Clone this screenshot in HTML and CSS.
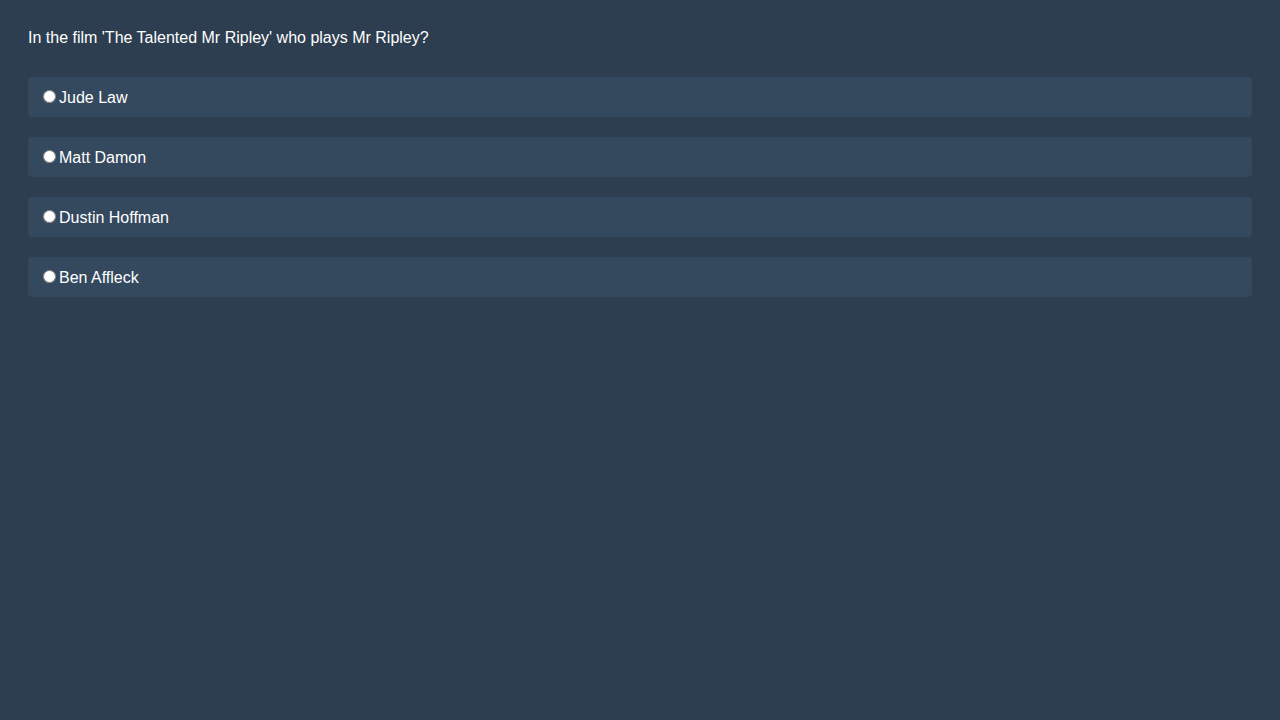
FILE: index.html
```html
<!DOCTYPE html>
<html lang="en">
<head>
<meta charset="utf-8">
<title>Quiz</title>
<link rel="stylesheet" href="styles.css">
</head>
<body>
<main class="quiz">
  <p class="question">In the film 'The Talented Mr Ripley' who plays Mr Ripley?</p>
  <div class="options">
    <label class="option"><input type="radio" name="answer" value="a">Jude Law</label>
    <label class="option"><input type="radio" name="answer" value="b">Matt Damon</label>
    <label class="option"><input type="radio" name="answer" value="c">Dustin Hoffman</label>
    <label class="option"><input type="radio" name="answer" value="d">Ben Affleck</label>
  </div>
</main>
</body>
</html>
```

FILE: styles.css
```css
html, body {
  margin: 0;
  height: 100%;
  background: #2c3e50;
}
body {
  font-family: "Liberation Sans", Arial, sans-serif;
  font-size: 16px;
  color: #ffffff;
}
.quiz {
  padding: 29px 28px 28px;
}
.question {
  margin: 0 0 30px 0;
  line-height: 18px;
}
.options {
  display: flex;
  flex-direction: column;
  gap: 20px;
}
.option {
  display: flex;
  align-items: center;
  background: #34495e;
  border-radius: 4px;
  padding: 11px 10px 9px;
  line-height: 20px;
  cursor: pointer;
}
.option input {
  margin: -4px 3px 0 5px;
}
```
